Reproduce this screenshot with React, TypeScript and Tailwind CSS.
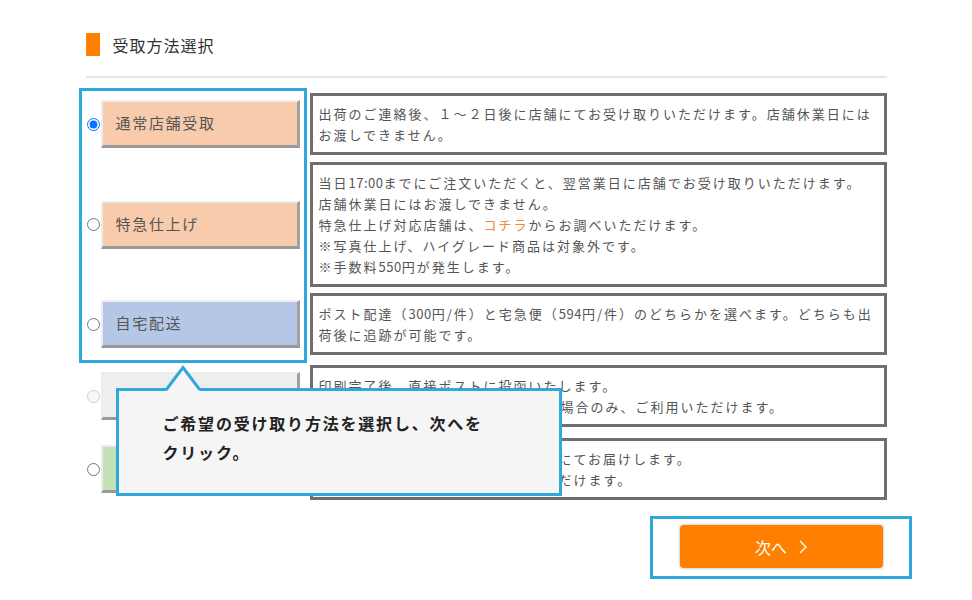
import type { ReactNode } from 'react'

type Row = {
  label: string
  bg: string
  text: string
  checked?: boolean
  disabled?: boolean
  gap: string
  body: ReactNode
}

const rows: Row[] = [
  {
    label: '通常店舗受取',
    bg: 'bg-[#f8cbad]',
    text: 'text-[#555]',
    checked: true,
    gap: 'mb-[7px]',
    body: (
      <>
        出荷のご連絡後、１～２日後に店舗にてお受け取りいただけます。店舗休業日には
        <br />
        お渡しできません。
      </>
    ),
  },
  {
    label: '特急仕上げ',
    bg: 'bg-[#f8cbad]',
    text: 'text-[#555]',
    gap: 'mb-[6px]',
    body: (
      <>
        当日<span className="tracking-[0.5px]">17:00</span>までにご注文いただくと、翌営業日に店舗でお受け取りいただけます。
        <br />
        店舗休業日にはお渡しできません。
        <br />
        特急仕上げ対応店舗は、<span className="text-[#f58634]">コチラ</span>からお調べいただけます。
        <br />
        ※写真仕上げ、ハイグレード商品は対象外です。
        <br />
        ※手数料<span className="tracking-[0.5px]">550</span>円が発生します。
      </>
    ),
  },
  {
    label: '自宅配送',
    bg: 'bg-[#b4c7e7]',
    text: 'text-[#555]',
    gap: 'mb-[10px]',
    body: (
      <>
        ポスト配達（<span className="tracking-[0.5px]">300</span>円/件）と宅急便（<span className="tracking-[0.5px]">594</span>円/件）のどちらかを選べます。どちらも出
        <br />
        荷後に追跡が可能です。
      </>
    ),
  },
  {
    label: 'ポスト投函',
    bg: 'bg-[#eeeeee]',
    text: 'text-[#bbb]',
    disabled: true,
    gap: 'mb-[11px]',
    body: (
      <>
        印刷完了後、直接ポストに投函いたします。
        <br />
        厚さ3cm以内のメール便対応商品の場合のみ、ご利用いただけます。
      </>
    ),
  },
  {
    label: '宅急便配送',
    bg: 'bg-[#c5e0b4]',
    text: 'text-[#555]',
    gap: 'mb-0',
    body: (
      <>
        ご指定の住所へヤマト運輸の宅急便にてお届けします。
        <br />
        配送状況は追跡番号にてご確認いただけます。
      </>
    ),
  },
]

export default function App() {
  return (
    <div className="min-h-[600px] bg-white font-['Noto_Sans_CJK_JP',sans-serif]">
      <div className="mx-auto w-[801px] pt-[33px]">
        <div className="flex h-[23px] items-center">
          <span className="h-[23px] w-[14px] bg-[#ff7f00]" />
          <h1 className="ml-[13px] text-[16px] tracking-[1px] text-[#333]">受取方法選択</h1>
        </div>
        <div className="mt-[20px] h-[2px] bg-[#e6e6e6]" />

        <div className="relative mt-[15px]">
          {rows.map((r) => (
            <div key={r.label} className={`flex items-center ${r.gap}`}>
              <div className="flex w-[214px] shrink-0 items-center">
                <input
                  type="radio"
                  name="receive"
                  defaultChecked={r.checked}
                  disabled={r.disabled}
                  className="ml-[1px] h-[13px] w-[13px]"
                />
                <div
                  className={`ml-auto flex h-[48px] w-[199px] items-center border-t-[2px] border-l-[2px] border-[#ececec] border-r-[3px] border-b-[3px] border-r-[#a0a0a0] border-b-[#999] pl-[13px] text-[15px] tracking-[1.7px] ${r.bg} ${r.text}`}
                >
                  {r.label}
                </div>
              </div>
              <div className="ml-[10px] w-[577px] min-w-0 shrink-0 overflow-hidden whitespace-nowrap border-[3px] border-[#6f6f6f] px-[6px] py-[7px] text-[13px] leading-[21px] tracking-[2px] text-[#555]">
                {r.body}
              </div>
            </div>
          ))}

          {/* annotation frame round the options */}
          <div className="pointer-events-none absolute left-[-7px] top-[-5px] h-[275px] w-[228px] border-[3px] border-[#2fa8da]" />

          {/* callout */}
          <div className="absolute left-[30px] top-[295px] z-10 h-[108px] w-[446px] border-[3px] border-[#2fa8da] bg-[#f5f5f5] pl-[44px] pt-[18px]">
            <svg width="36" height="28" viewBox="0 0 36 28" className="absolute left-[46px] top-[-26px]">
              <path d="M0 27 L18 2 L36 27 Z" fill="#f5f5f5" />
              <path d="M1 25 L18 2.5 L35 25" fill="none" stroke="#2fa8da" strokeWidth="3" />
            </svg>
            <p className="whitespace-nowrap text-[16px] font-bold leading-[29px] tracking-[1.8px] text-[#222]">
              ご希望の受け取り方法を選択し、次へを
              <br />
              クリック。
            </p>
          </div>
        </div>

        <div className="mt-[25px] flex justify-end pr-[4px]">
          <div className="relative">
            <span className="pointer-events-none absolute -bottom-[11px] -left-[30px] -right-[29px] -top-[9px] border-[3px] border-[#2fa8da]" />
            <button className="flex h-[43px] w-[203px] items-center justify-center gap-[12px] rounded-[4px] bg-[#ff7f00] text-[16px] text-white shadow-[0_0_3px_rgba(0,0,0,0.35)]">
              <span>次へ</span>
              <svg width="8" height="14" viewBox="0 0 8 14">
                <path d="M1 1 L7 7 L1 13" fill="none" stroke="#fff" strokeWidth="1.4" />
              </svg>
            </button>
          </div>
        </div>
      </div>
    </div>
  )
}
